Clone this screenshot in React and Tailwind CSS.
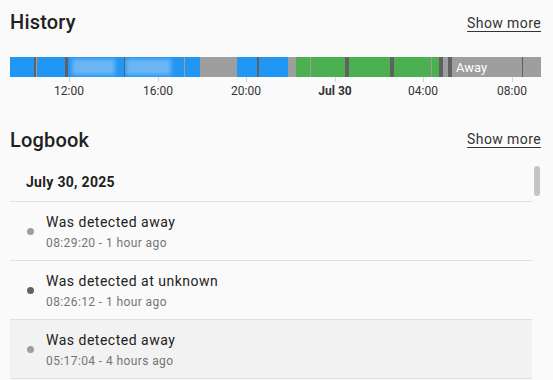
const BLUE = "bg-[#2196f3]";
const GREEN = "bg-[#4caf50]";
const GRAY = "bg-[#9e9e9e]";
const DARK = "bg-[#616161]";

// widths in px along the 531px bar
const segments = [
  { w: "w-[24px]", c: BLUE },
  { w: "w-[2px]", c: DARK },
  { w: "w-[1px]", c: GRAY },
  { w: "w-[28px]", c: BLUE },
  { w: "w-[3px]", c: DARK },
  { w: "w-[56px]", c: BLUE, blur: "ml-[4px] w-[43px]" },
  { w: "w-[1px]", c: DARK },
  { w: "w-[59px]", c: BLUE, blur: "ml-[1px] w-[45px]" },
  { w: "w-[1px]", c: GRAY },
  { w: "w-[15px]", c: BLUE },
  { w: "w-[37px]", c: GRAY },
  { w: "w-[20px]", c: BLUE },
  { w: "w-[2px]", c: DARK },
  { w: "w-[29px]", c: BLUE },
  { w: "w-[8px]", c: GRAY },
  { w: "w-[14px]", c: GREEN },
  { w: "w-[1px]", c: GRAY },
  { w: "w-[34px]", c: GREEN },
  { w: "w-[4px]", c: DARK },
  { w: "w-[41px]", c: GREEN },
  { w: "w-[4px]", c: DARK },
  { w: "w-[37px]", c: GREEN },
  { w: "w-[1px]", c: GRAY },
  { w: "w-[7px]", c: GREEN },
  { w: "w-[4px]", c: DARK },
  { w: "w-[5px]", c: GRAY },
  { w: "w-[4px]", c: DARK },
  { w: "w-[70px]", c: GRAY, label: "Away" },
  { w: "w-[1px]", c: DARK },
  { w: "w-[18px]", c: GRAY },
];

const ticks = [
  { x: "left-[59px]", label: "12:00" },
  { x: "left-[148px]", label: "16:00" },
  { x: "left-[236px]", label: "20:00" },
  { x: "left-[325px]", label: "Jul 30", bold: true },
  { x: "left-[413px]", label: "04:00" },
  { x: "left-[502px]", label: "08:00" },
];

const entries = [
  { title: "Was detected away", time: "08:29:20 - 1 hour ago", dot: "bg-[#9e9e9e]" },
  { title: "Was detected at unknown", time: "08:26:12 - 1 hour ago", dot: "bg-[#616161]" },
  { title: "Was detected away", time: "05:17:04 - 4 hours ago", dot: "bg-[#9e9e9e]", active: true },
];

function SectionHeader({ title, linkClass = "" }) {
  return (
    <div className="flex items-center justify-between h-[28px]">
      <h2 className="text-[20px] leading-[28px] text-[#212121] tracking-[0.2px] font-medium">{title}</h2>
      <a href="#" className={`${linkClass} text-[14px] leading-[20px] text-[#333] underline underline-offset-[3px] tracking-[0.4px]`}>
        Show more
      </a>
    </div>
  );
}

export default function App() {
  return (
    <div className="w-[553px] h-[380px] overflow-hidden bg-[#fafafa] pl-[10px] pr-[12px] pt-[8px] font-['Roboto',sans-serif] text-[#212121]">
      <SectionHeader title="History" linkClass="mt-[1px]" />

      {/* Timeline */}
      <div className="mt-[21px] flex h-[20px] w-[531px]">
        {segments.map((s, i) => (
          <div key={i} className={`${s.w} ${s.c} shrink-0 h-full flex items-center overflow-hidden`}>
            {s.blur && <div className={`${s.blur} h-[16px] bg-[#6cb6f5] blur-[2px] shrink-0`} />}
            {s.label && <span className="pl-[4px] text-[13px] text-white leading-none">{s.label}</span>}
          </div>
        ))}
      </div>
      <div className="relative h-[26px] w-[531px]">
        {ticks.map((t) => (
          <div key={t.label} className={`absolute top-0 ${t.x} w-[1px] h-[5px] bg-[#d4d4d4]`} />
        ))}
        {ticks.map((t) => (
          <span
            key={t.label + "l"}
            className={`absolute top-[7px] ${t.x} -translate-x-1/2 text-[12px] leading-[14px] text-[#333] ${t.bold ? "font-bold" : ""}`}
          >
            {t.label}
          </span>
        ))}
      </div>

      <div className="mt-[23px]">
        <SectionHeader title="Logbook" linkClass="-mt-[2px]" />
      </div>

      {/* Logbook list */}
      <div className="mt-[9px] flex">
        <div className="w-[522px]">
          <div className="h-[39px] flex items-center pl-[16px] pt-[1px] text-[14px] font-bold tracking-[0.3px] border-b border-[#e0e0e0]">
            July 30, 2025
          </div>
          {entries.map((e, i) => (
            <div
              key={i}
              className={`h-[59px] flex items-center border-b border-[#e0e0e0] ${e.active ? "bg-[#f2f2f2]" : ""}`}
            >
              <div className="w-[36px] flex justify-center pl-[4px]">
                <span className={`block w-[7px] h-[7px] rounded-full ${e.dot}`} />
              </div>
              <div className="flex flex-col pt-[2px]">
                <span className="text-[14px] leading-[20px] tracking-[0.5px] text-[#212121]">{e.title}</span>
                <span className="mt-[1px] text-[12px] leading-[20px] tracking-[0.4px] text-[#757575]">{e.time}</span>
              </div>
            </div>
          ))}
        </div>
        <div className="w-[9px] pl-[2px] pt-[3px]">
          <div className="w-[6px] h-[30px] rounded-full bg-[#c4c4c4]" />
        </div>
      </div>
    </div>
  );
}
